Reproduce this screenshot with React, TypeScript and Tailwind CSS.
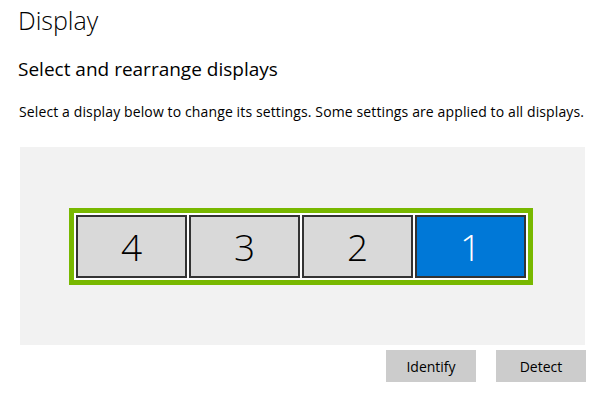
import React from "react";

const tiles = [
  { n: "4", active: false },
  { n: "3", active: false },
  { n: "2", active: false },
  { n: "1", active: true },
];

export default function App() {
  return (
    <div className="w-[603px] h-[397px] bg-white text-black overflow-hidden font-['Open_Sans',sans-serif]">
      <div className="pl-[18px] pt-[4px] h-[36px] text-[25px] leading-[32px] font-light">Display</div>
      <div className="mt-[21px] pl-[18px] text-[19px] leading-[24px]">Select and rearrange displays</div>
      <div className="mt-[21px] pl-[19px] text-[14px] leading-[20px] whitespace-nowrap tracking-[0.12px]">
        Select a display below to change its settings. Some settings are applied to all displays.
      </div>
      <div className="mt-[25px] ml-[20px] w-[565px] h-[198px] bg-[#f2f2f2] flex items-center justify-center pr-[3px]">
        <div className="border-[5px] border-[#78b800] bg-white p-[2px] flex gap-[2px]">
          {tiles.map((t) => (
            <div
              key={t.n}
              className={
                t.active
                  ? "w-[111px] h-[63px] border-2 border-[#333333] bg-[#0078d7] text-white flex items-center justify-center text-[37px] font-light leading-none"
                  : "w-[111px] h-[63px] border-2 border-[#333333] bg-[#d9d9d9] text-black flex items-center justify-center text-[37px] font-light leading-none"
              }
            >
              {t.n}
            </div>
          ))}
        </div>
      </div>
      <div className="mt-[5px] ml-[386px] flex gap-[20px]">
        <div className="w-[90px] h-[32px] bg-[#cccccc] flex items-center justify-center text-[14px]">Identify</div>
        <div className="w-[90px] h-[32px] bg-[#cccccc] flex items-center justify-center text-[14px]">Detect</div>
      </div>
    </div>
  );
}
